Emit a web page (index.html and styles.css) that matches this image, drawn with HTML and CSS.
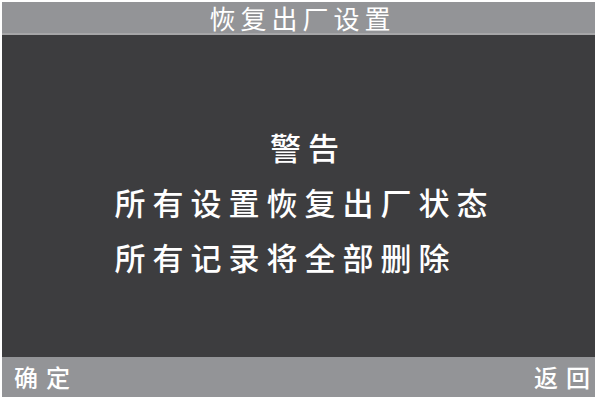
FILE: index.html
```html
<!DOCTYPE html>
<html lang="zh-CN">
<head>
<meta charset="utf-8">
<title>恢复出厂设置</title>
<link rel="stylesheet" href="styles.css">
</head>
<body>
<div class="screen">
  <header class="title-bar">
    <h1 class="title">恢复出厂设置</h1>
  </header>
  <main class="content">
    <div class="message">
      <p class="line warn">警告</p>
      <p class="line">所有设置恢复出厂状态</p>
      <p class="line">所有记录将全部删除</p>
    </div>
  </main>
  <footer class="soft-keys">
    <span class="key key-left">确定</span>
    <span class="key key-right">返回</span>
  </footer>
</div>
</body>
</html>
```

FILE: styles.css
```css
html, body {
  margin: 0;
  padding: 0;
  background: #ffffff;
}

body {
  width: 600px;
  height: 400px;
  overflow: hidden;
  font-family: "Noto Sans CJK SC", "Noto Sans", sans-serif;
  color: #ffffff;
}

.screen {
  margin: 2px 0 0 2px;
  width: 593px;
  height: 395px;
  display: flex;
  flex-direction: column;
  background: #3d3d3f;
}

.title-bar {
  height: 31px;
  background: #939497;
  border-bottom: 2px solid #a6a6a8;
  display: flex;
  align-items: center;
  justify-content: center;
}

.title {
  margin: 0;
  font-size: 26px;
  font-weight: 400;
  line-height: 31px;
  letter-spacing: 5px;
  padding-left: 8px;
  color: #ffffff;
}

.content {
  flex: 1;
  display: flex;
  justify-content: center;
  padding-top: 84px;
  box-sizing: border-box;
}

.message {
  display: flex;
  flex-direction: column;
  padding-left: 12px;
}

.line {
  margin: 0;
  font-size: 31px;
  font-weight: 500;
  line-height: 55px;
  letter-spacing: 7px;
  white-space: nowrap;
}

.warn {
  text-align: center;
  padding-left: 7px;
}

.soft-keys {
  height: 40px;
  background: #939497;
  display: flex;
  align-items: center;
  justify-content: space-between;
  padding: 0 5px 0 12px;
}

.key {
  font-size: 24px;
  font-weight: 500;
  line-height: 40px;
  letter-spacing: 8px;
}

.key-right {
  margin-right: -8px;
}
```
